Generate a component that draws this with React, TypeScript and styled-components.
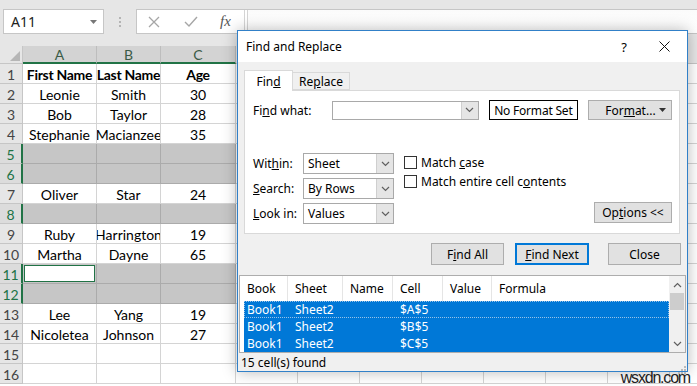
import styled, { createGlobalStyle } from "styled-components";

const GlobalStyle = createGlobalStyle`
  html, body {
    margin: 0;
    padding: 0;
    background: #fff;
  }
  * {
    box-sizing: border-box;
  }
`;

const UI = `"Noto Sans", "DejaVu Sans", sans-serif`;
const CELL = `Lato, "Noto Sans", sans-serif`;

type RowData = { cells: string[]; bold?: boolean; sel?: boolean };

const rows: RowData[] = [
  { cells: ["First Name", "Last Name", "Age"], bold: true },
  { cells: ["Leonie", "Smith", "30"] },
  { cells: ["Bob", "Taylor", "28"] },
  { cells: ["Stephanie", "Macianzee", "35"] },
  { cells: ["", "", ""], sel: true },
  { cells: ["", "", ""], sel: true },
  { cells: ["Oliver", "Star", "24"] },
  { cells: ["", "", ""], sel: true },
  { cells: ["Ruby", "Harrington", "19"] },
  { cells: ["Martha", "Dayne", "65"] },
  { cells: ["", "", ""], sel: true },
  { cells: ["", "", ""], sel: true },
  { cells: ["Lee", "Yang", "19"] },
  { cells: ["Nicoletea", "Johnson", "27"] },
  { cells: ["", "", ""] },
  { cells: ["", "", ""] },
];

// only A-C have visible letters; the rest sit under the dialog
const columns = ["A", "B", "C", "", "", "", "", "", "", "", ""];
const extraCols = 8;

const results = [
  { book: "Book1", sheet: "Sheet2", cell: "$A$5" },
  { book: "Book1", sheet: "Sheet2", cell: "$B$5" },
  { book: "Book1", sheet: "Sheet2", cell: "$C$5" },
];

const Chevron = ({ up }: { up?: boolean }) => (
  <svg width="9" height="6" viewBox="0 0 9 6">
    <polyline
      points={up ? "1,5 4.5,1.5 8,5" : "1,1 4.5,4.5 8,1"}
      fill="none"
      stroke="#606060"
      strokeWidth="1.2"
    />
  </svg>
);

const Caret = ({ color = "#333" }: { color?: string }) => (
  <svg width="7" height="4" viewBox="0 0 7 4">
    <polygon points="0,0 7,0 3.5,4" fill={color} />
  </svg>
);

const App = () => {
  return (
    <>
      <GlobalStyle />
      <Screen>
        <TopBar>
          <NameBox>
            <span>A11</span>
            <Caret color="#777" />
          </NameBox>
          <Grip>
            <i />
            <i />
            <i />
          </Grip>
          <FormulaBox>
            <FormulaTools>
              <ToolIcon>
                <svg width="12" height="12" viewBox="0 0 12 12">
                  <path d="M1 1 L11 11 M11 1 L1 11" stroke="#a6a6a6" strokeWidth="1.3" />
                </svg>
              </ToolIcon>
              <ToolIcon>
                <svg width="14" height="12" viewBox="0 0 14 12">
                  <polyline points="1,6 5,10 13,1" fill="none" stroke="#a6a6a6" strokeWidth="1.4" />
                </svg>
              </ToolIcon>
              <FxLabel>fx</FxLabel>
            </FormulaTools>
            <FormulaInput />
          </FormulaBox>
        </TopBar>

        <Sheet>
          <Corner>
            <svg width="10" height="10" viewBox="0 0 10 10">
              <polygon points="10,0 10,10 0,10" fill="#b6b6b6" />
            </svg>
          </Corner>
          {columns.map((c, i) => (
            <ColHead key={i} $sel={i < 3}>
              {c}
            </ColHead>
          ))}
          {rows.map((r, ri) => (
            <RowGroup key={ri}>
              <RowHead $sel={r.sel}>{ri + 1}</RowHead>
              {r.cells.map((text, ci) => (
                <Cell
                  key={ci}
                  $sel={r.sel}
                  $bold={r.bold}
                  $active={ri === 10 && ci === 0}
                >
                  {text}
                </Cell>
              ))}
              {Array.from({ length: extraCols }).map((_, k) => (
                <Cell key={`x${k}`} />
              ))}
            </RowGroup>
          ))}
        </Sheet>

        <Dialog>
          <TitleBar>
            <Title>Find and Replace</Title>
            <HelpMark>?</HelpMark>
            <CloseX>
              <svg width="11" height="11" viewBox="0 0 11 11">
                <path d="M0.5 0.5 L10.5 10.5 M10.5 0.5 L0.5 10.5" stroke="#111" strokeWidth="1" />
              </svg>
            </CloseX>
          </TitleBar>

          <DialogBody>
            <TabsRow>
              <Tab $active>
                Fin<u>d</u>
              </Tab>
              <Tab>
                Re<u>p</u>lace
              </Tab>
            </TabsRow>

            <Panel>
              <FindRow>
                <FieldLabel $w={79}>
                  Fi<u>n</u>d what:
                </FieldLabel>
                <Combo $w={147} $h={19}>
                  <ComboText />
                  <ComboArrow>
                    <Chevron />
                  </ComboArrow>
                </Combo>
                <NoFormat>No Format Set</NoFormat>
                <FormatButton>
                  <span>
                    For<u>m</u>at...
                  </span>
                  <Caret />
                </FormatButton>
              </FindRow>

              <OptionsArea>
                <SelectColumn>
                  <FieldRow>
                    <FieldLabel $w={50}>
                      Wit<u>h</u>in:
                    </FieldLabel>
                    <Combo $w={91} $h={21}>
                      <ComboText>Sheet</ComboText>
                      <ComboArrow>
                        <Chevron />
                      </ComboArrow>
                    </Combo>
                  </FieldRow>
                  <FieldRow>
                    <FieldLabel $w={50}>
                      <u>S</u>earch:
                    </FieldLabel>
                    <Combo $w={91} $h={21}>
                      <ComboText>By Rows</ComboText>
                      <ComboArrow>
                        <Chevron />
                      </ComboArrow>
                    </Combo>
                  </FieldRow>
                  <FieldRow>
                    <FieldLabel $w={50}>
                      <u>L</u>ook in:
                    </FieldLabel>
                    <Combo $w={91} $h={21}>
                      <ComboText>Values</ComboText>
                      <ComboArrow>
                        <Chevron />
                      </ComboArrow>
                    </Combo>
                  </FieldRow>
                </SelectColumn>

                <CheckColumn>
                  <CheckRow>
                    <CheckBox />
                    <span>
                      Match <u>c</u>ase
                    </span>
                  </CheckRow>
                  <CheckRow>
                    <CheckBox />
                    <span>
                      Match entire cell c<u>o</u>ntents
                    </span>
                  </CheckRow>
                </CheckColumn>

                <OptionsButton>
                  Op<u>t</u>ions &lt;&lt;
                </OptionsButton>
              </OptionsArea>
            </Panel>

            <ButtonRow>
              <DlgButton>
                F<u>i</u>nd All
              </DlgButton>
              <DlgButton $default $gap={11}>
                <u>F</u>ind Next
              </DlgButton>
              <DlgButton $gap={19}>Close</DlgButton>
            </ButtonRow>

            <Results>
              <ResultsMain>
                <ResultsHeader>
                  <HeadCell $w={44} $pad={3}>Book</HeadCell>
                  <HeadCell $w={55}>Sheet</HeadCell>
                  <HeadCell $w={50}>Name</HeadCell>
                  <HeadCell $w={50}>Cell</HeadCell>
                  <HeadCell $w={49}>Value</HeadCell>
                  <HeadCell $last>Formula</HeadCell>
                </ResultsHeader>
                {results.map((r, i) => (
                  <ResultRow key={i} $focus={i === 0}>
                    <RowCell $w={44} $pad={3}>{r.book}</RowCell>
                    <RowCell $w={55}>{r.sheet}</RowCell>
                    <RowCell $w={50} />
                    <RowCell $w={50}>{r.cell}</RowCell>
                    <RowCell $w={49} />
                    <RowCell />
                  </ResultRow>
                ))}
              </ResultsMain>
              <ScrollBar>
                <ScrollArrow>
                  <Chevron up />
                </ScrollArrow>
                <ScrollThumb />
                <ScrollTrack />
                <ScrollArrow>
                  <Chevron />
                </ScrollArrow>
              </ScrollBar>
            </Results>

            <StatusBar>
              15 cell(s) found
              <SizeGrip>
                <svg width="10" height="10" viewBox="0 0 10 10">
                  {[
                    [8, 2],
                    [8, 5],
                    [5, 5],
                    [8, 8],
                    [5, 8],
                    [2, 8],
                  ].map(([x, y], i) => (
                    <rect key={i} x={x} y={y} width="2" height="2" fill="#b9b9b9" />
                  ))}
                </svg>
              </SizeGrip>
            </StatusBar>
          </DialogBody>
        </Dialog>

        <Watermark>wsxdn.com</Watermark>
      </Screen>
    </>
  );
};

export default App;

const Screen = styled.div`
  position: relative;
  width: 697px;
  height: 386px;
  overflow: hidden;
  background: #fff;
`;

/* ---------- formula bar ---------- */

const TopBar = styled.div`
  height: 46px;
  background: #e6e6e6;
  display: flex;
  align-items: flex-start;
  padding: 9px 0 0 3px;
`;

const NameBox = styled.div`
  width: 101px;
  height: 25px;
  background: #fff;
  border: 1px solid #c6c6c6;
  display: flex;
  align-items: center;
  justify-content: space-between;
  padding: 0 6px 0 7px;
  font-family: ${UI};
  font-size: 14px;
  color: #222;
`;

const Grip = styled.div`
  width: 32px;
  height: 25px;
  display: flex;
  flex-direction: column;
  align-items: center;
  justify-content: center;
  gap: 2px;

  i {
    display: block;
    width: 2px;
    height: 2px;
    background: #b4b4b4;
  }
`;

const FormulaBox = styled.div`
  flex: 1;
  height: 25px;
  display: flex;
  background: #fff;
  border: 1px solid #c6c6c6;
  border-right: none;
`;

const FormulaTools = styled.div`
  width: 108px;
  display: flex;
  align-items: center;
  padding-left: 10px;
  gap: 23px;
  border-right: 1px solid #d4d4d4;
`;

const ToolIcon = styled.div`
  width: 14px;
  display: flex;
  justify-content: center;
`;

const FxLabel = styled.div`
  font-family: "Liberation Serif", serif;
  font-style: italic;
  font-size: 15px;
  color: #555;
  margin-left: -1px;
`;

const FormulaInput = styled.div`
  flex: 1;
  margin-left: 2px;
  border-left: 1px solid #d4d4d4;
  background: linear-gradient(#fbfbfb, #fff);
`;

/* ---------- sheet grid ---------- */

const Sheet = styled.div`
  display: grid;
  grid-template-columns: 23px 74px 64px 75px repeat(8, 62px);
  grid-auto-rows: 20px;
  grid-template-rows: 18px;
  font-family: ${CELL};
  font-size: 14px;
`;

const RowGroup = styled.div`
  display: contents;
`;

const Corner = styled.div`
  background: #e6e6e6;
  border-right: 1px solid #c6c6c6;
  border-bottom: 1px solid #c6c6c6;
  display: flex;
  align-items: flex-end;
  justify-content: flex-end;
  padding: 0 2px 2px 0;
`;

const ColHead = styled.div<{ $sel?: boolean }>`
  background: ${({ $sel }) => ($sel ? "#d3d3d3" : "#e6e6e6")};
  color: ${({ $sel }) => ($sel ? "#3a5a46" : "#444")};
  border-right: 1px solid #bdbdbd;
  border-bottom: ${({ $sel }) => ($sel ? "2px solid #217346" : "1px solid #c6c6c6")};
  display: flex;
  align-items: center;
  justify-content: center;
  font-size: 14px;
`;

const RowHead = styled.div<{ $sel?: boolean }>`
  background: ${({ $sel }) => ($sel ? "#dcdcdc" : "#e6e6e6")};
  color: ${({ $sel }) => ($sel ? "#217346" : "#444")};
  border-right: ${({ $sel }) => ($sel ? "2px solid #217346" : "1px solid #c6c6c6")};
  border-bottom: 1px solid #c6c6c6;
  display: flex;
  align-items: center;
  justify-content: center;
  padding-top: 1px;
  font-size: 14px;
`;

const Cell = styled.div<{ $sel?: boolean; $bold?: boolean; $active?: boolean }>`
  background: ${({ $sel, $active }) => ($active ? "#fff" : $sel ? "#c6c6c6" : "#fff")};
  border-right: 1px solid ${({ $sel }) => ($sel ? "#ababab" : "#d4d4d4")};
  border-bottom: 1px solid ${({ $sel }) => ($sel ? "#ababab" : "#d4d4d4")};
  box-shadow: ${({ $active }) =>
    $active ? "inset 0 0 0 1px #c6c6c6, inset 0 0 0 2px #217346" : "none"};
  font-weight: ${({ $bold }) => ($bold ? 700 : 400)};
  letter-spacing: ${({ $bold }) => ($bold ? "-0.3px" : "0")};
  color: #000;
  display: flex;
  align-items: center;
  justify-content: center;
  padding-top: 1px;
  white-space: nowrap;
  overflow: hidden;
`;

/* ---------- dialog ---------- */

const Dialog = styled.div`
  position: absolute;
  left: 237px;
  top: 30px;
  width: 451px;
  height: 342px;
  border: 1px solid #3180c8;
  background: #f0f0f0;
  box-shadow: 0 0 14px rgba(0, 0, 0, 0.28);
  display: flex;
  flex-direction: column;
  font-family: ${UI};
  font-size: 12px;
  color: #000;
`;

const TitleBar = styled.div`
  height: 31px;
  flex: none;
  background: #fff;
  display: flex;
  align-items: center;
  padding-left: 8px;
`;

const Title = styled.div`
  flex: 1;
`;

const HelpMark = styled.div`
  width: 34px;
  text-align: center;
  font-size: 13px;
`;

const CloseX = styled.div`
  width: 46px;
  display: flex;
  justify-content: center;
`;

const DialogBody = styled.div`
  flex: 1;
  display: flex;
  flex-direction: column;
`;

const TabsRow = styled.div`
  display: flex;
  align-items: flex-end;
  height: 20px;
  margin: 8px 0 0 6px;
  position: relative;
  z-index: 1;
`;

const Tab = styled.div<{ $active?: boolean }>`
  width: ${({ $active }) => ($active ? 49 : 57)}px;
  height: ${({ $active }) => ($active ? 21 : 18)}px;
  margin-bottom: ${({ $active }) => ($active ? -1 : 0)}px;
  background: ${({ $active }) => ($active ? "#fff" : "#f0f0f0")};
  border: 1px solid #d9d9d9;
  border-bottom: ${({ $active }) => ($active ? "none" : "1px solid #d9d9d9")};
  border-left: ${({ $active }) => ($active ? "1px solid #d9d9d9" : "none")};
  display: flex;
  align-items: center;
  justify-content: center;
  padding-top: ${({ $active }) => ($active ? 1 : 0)}px;
`;

const Panel = styled.div`
  height: 144px;
  margin: 0 7px 0 6px;
  background: #fff;
  border: 1px solid #d9d9d9;
  padding: 9px 7px 0 8px;
`;

const FindRow = styled.div`
  display: flex;
  align-items: center;
  height: 20px;
`;

const FieldLabel = styled.div<{ $w: number }>`
  width: ${({ $w }) => $w}px;
  flex: none;
`;

const Combo = styled.div<{ $w: number; $h: number }>`
  width: ${({ $w }) => $w}px;
  height: ${({ $h }) => $h}px;
  border: 1px solid #a9a9a9;
  background: #fff;
  display: flex;
`;

const ComboText = styled.div`
  flex: 1;
  padding-left: 4px;
  display: flex;
  align-items: center;
`;

const ComboArrow = styled.div`
  width: 17px;
  background: #e5e5e5;
  border-left: 1px solid #cfcfcf;
  display: flex;
  align-items: center;
  justify-content: center;
`;

const NoFormat = styled.div`
  width: 90px;
  height: 20px;
  margin-left: 10px;
  border: 1px solid #000;
  display: flex;
  align-items: center;
  justify-content: center;
  letter-spacing: -0.2px;
`;

const FormatButton = styled.div`
  width: 84px;
  height: 20px;
  margin-left: 10px;
  background: #e1e1e1;
  border: 1px solid #adadad;
  display: flex;
  align-items: center;
  justify-content: space-between;
  padding: 0 5px 0 16px;
`;

const OptionsArea = styled.div`
  display: flex;
  margin-top: 33px;
`;

const SelectColumn = styled.div`
  display: flex;
  flex-direction: column;
  gap: 4px;
`;

const FieldRow = styled.div`
  display: flex;
  align-items: center;
`;

const CheckColumn = styled.div`
  display: flex;
  flex-direction: column;
  gap: 4px;
  margin-left: 10px;
  padding-top: 2px;
`;

const CheckRow = styled.div`
  display: flex;
  align-items: center;
  gap: 4px;
  height: 15px;
`;

const CheckBox = styled.div`
  width: 13px;
  height: 13px;
  border: 1px solid #333;
  background: #fff;
`;

const OptionsButton = styled.div`
  margin-left: auto;
  align-self: flex-end;
  width: 78px;
  height: 21px;
  margin-bottom: 1px;
  background: #e1e1e1;
  border: 1px solid #adadad;
  display: flex;
  align-items: center;
  justify-content: center;
`;

const ButtonRow = styled.div`
  display: flex;
  justify-content: flex-end;
  margin: 9px 6px 0 0;
`;

const DlgButton = styled.div<{ $default?: boolean; $gap?: number }>`
  width: ${({ $default }) => ($default ? 74 : 73)}px;
  height: 22px;
  margin-left: ${({ $gap }) => $gap || 0}px;
  background: #e1e1e1;
  border: ${({ $default }) => ($default ? "2px solid #0078d7" : "1px solid #adadad")};
  display: flex;
  align-items: center;
  justify-content: center;
`;

const Results = styled.div`
  height: 78px;
  margin: 10px 1px 0 1px;
  background: #fff;
  border: 1px solid #adadad;
  display: flex;
`;

const ResultsMain = styled.div`
  flex: 1;
  padding-left: 4px;
  display: flex;
  flex-direction: column;
`;

const ResultsHeader = styled.div`
  height: 25px;
  display: flex;
`;

const HeadCell = styled.div<{ $w?: number; $pad?: number; $last?: boolean }>`
  width: ${({ $w }) => ($w ? `${$w}px` : "auto")};
  flex: ${({ $last }) => ($last ? 1 : "none")};
  padding-left: ${({ $pad }) => $pad ?? 7}px;
  border-right: ${({ $last }) => ($last ? "none" : "1px solid #e5e5e5")};
  display: flex;
  align-items: center;
  color: #000;
`;

const ResultRow = styled.div<{ $focus?: boolean }>`
  height: 17px;
  display: flex;
  background: #0078d7;
  color: #fff;
  outline: ${({ $focus }) => ($focus ? "1px dotted #9ac2e6" : "none")};
  outline-offset: -1px;
`;

const RowCell = styled.div<{ $w?: number; $pad?: number }>`
  width: ${({ $w }) => ($w ? `${$w}px` : "auto")};
  flex: ${({ $w }) => ($w ? "none" : 1)};
  padding-left: ${({ $pad }) => $pad ?? 7}px;
  display: flex;
  align-items: center;
  white-space: nowrap;
`;

const ScrollBar = styled.div`
  width: 16px;
  background: #f0f0f0;
  display: flex;
  flex-direction: column;
`;

const ScrollArrow = styled.div`
  height: 17px;
  display: flex;
  align-items: center;
  justify-content: center;
`;

const ScrollThumb = styled.div`
  height: 17px;
  margin: 0 1px;
  background: #cdcdcd;
`;

const ScrollTrack = styled.div`
  flex: 1;
`;

const StatusBar = styled.div`
  flex: 1;
  position: relative;
  display: flex;
  align-items: center;
  padding-left: 3px;
`;

const SizeGrip = styled.div`
  position: absolute;
  right: 1px;
  bottom: 0;
  width: 10px;
  height: 10px;
`;

const Watermark = styled.div`
  position: absolute;
  right: 7px;
  bottom: -1px;
  font-family: "Liberation Sans", Arial, sans-serif;
  font-size: 16px;
  letter-spacing: -1.2px;
  color: #222;
`;
